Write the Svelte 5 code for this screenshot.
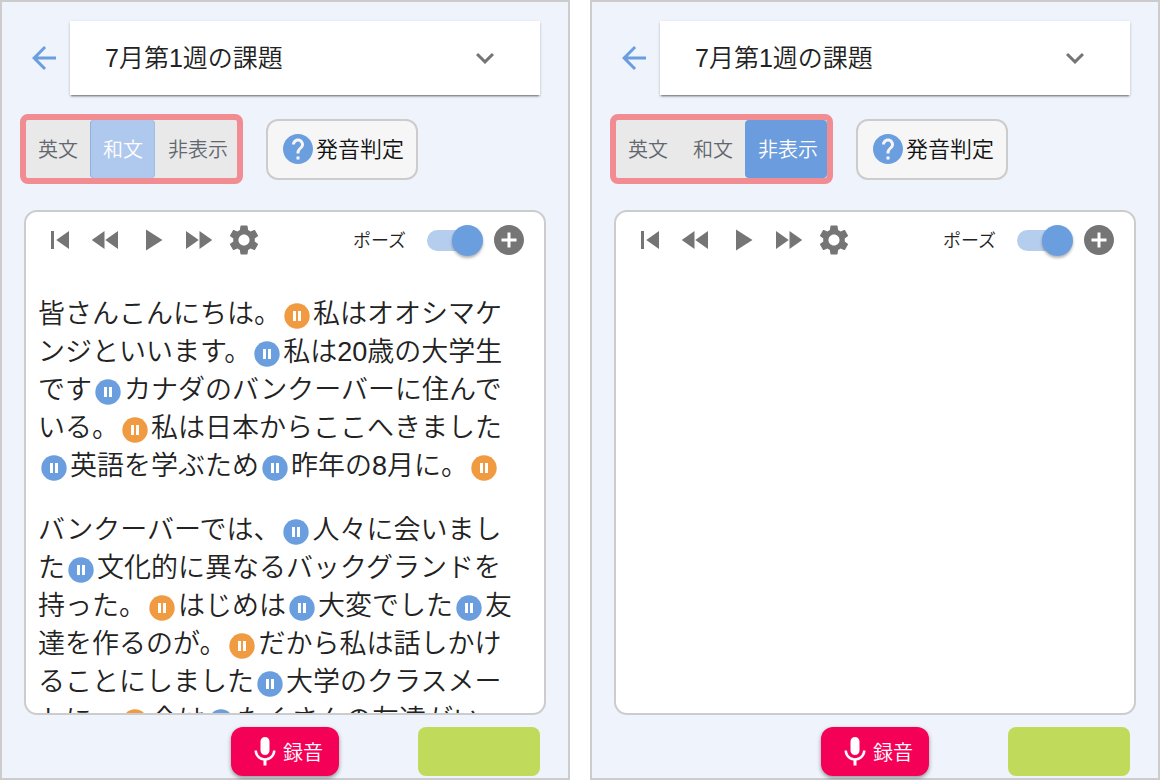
<script>
  const modes = ['英文', '和文', '非表示'];

  let screens = $state([
    { id: 'japanese', mode: 1, soft: true, pause: true },
    { id: 'hidden', mode: 2, soft: false, pause: true }
  ]);

  // Each run of text may be followed by a pause marker: s = short, l = long.
  const paragraphs = [
    [
      ['皆さんこんにちは。', 'l'],
      ['私はオオシマケンジといいます。', 's'],
      ['私は20歳の大学生です', 's'],
      ['カナダのバンクーバーに住んでいる。', 'l'],
      ['私は日本からここへきました', 's'],
      ['英語を学ぶため', 's'],
      ['昨年の8月に。', 'l']
    ],
    [
      ['バンクーバーでは、', 's'],
      ['人々に会いました', 's'],
      ['文化的に異なるバックグランドを持った。', 'l'],
      ['はじめは', 's'],
      ['大変でした', 's'],
      ['友達を作るのが。', 'l'],
      ['だから私は話しかけることにしました', 's'],
      ['大学のクラスメートに。', 'l'],
      ['今は', 's'],
      ['たくさんの友達がい', '']
    ]
  ];

  const players = [
    ['最初へ', 'M6 6h2v12H6zm3.5 6l8.5 6V6z'],
    ['巻き戻し', 'M11 18V6l-8.5 6 8.5 6zm.5-6l8.5 6V6l-8.5 6z'],
    ['再生', 'M8 5v14l11-7z'],
    ['早送り', 'M4 18l8.5-6L4 6v12zm9-12v12l8.5-6L13 6z'],
    ['設定', 'M19.14 12.94c.04-.3.06-.61.06-.94 0-.32-.02-.64-.07-.94l2.03-1.58c.18-.14.23-.41.12-.61l-1.92-3.32c-.12-.22-.37-.29-.59-.22l-2.39.96c-.5-.38-1.03-.7-1.62-.94l-.36-2.54c-.04-.24-.24-.41-.48-.41h-3.84c-.24 0-.43.17-.47.41l-.36 2.54c-.59.24-1.13.57-1.62.94l-2.39-.96c-.22-.08-.47 0-.59.22L2.74 8.87c-.12.21-.08.47.12.61l2.03 1.58c-.05.3-.09.63-.09.94s.02.64.07.94l-2.03 1.58c-.18.14-.23.41-.12.61l1.92 3.32c.12.22.37.29.59.22l2.39-.96c.5.38 1.03.7 1.62.94l.36 2.54c.05.24.24.41.48.41h3.84c.24 0 .44-.17.47-.41l.36-2.54c.59-.24 1.13-.56 1.62-.94l2.39.96c.22.08.47 0 .59-.22l1.92-3.32c.12-.22.07-.47-.12-.61l-2.01-1.58zM12 15.7c-2.04 0-3.7-1.66-3.7-3.7s1.66-3.7 3.7-3.7 3.7 1.66 3.7 3.7-1.66 3.7-3.7 3.7z']
  ];
</script>

{#snippet icon(d)}
  <svg class="icon" viewBox="0 0 24 24" aria-hidden="true"><path {d} /></svg>
{/snippet}

<main>
  {#each screens as screen (screen.id)}
    <section class="screen">
      <header>
        <button class="plain back" aria-label="戻る">
          {@render icon('M20 11H7.83l5.59-5.59L12 4l-8 8 8 8 1.41-1.41L7.83 13H20v-2z')}
        </button>
        <div class="task">
          <select aria-label="課題">
            <option>7月第1週の課題</option>
          </select>
          {@render icon('M16.59 8.59L12 13.17 7.41 8.59 6 10l6 6 6-6z')}
        </div>
      </header>

      <div class="controls">
        <div class="modes" class:soft={screen.soft}>
          {#each modes as label, i}
            <button
              class:active={screen.mode === i}
              aria-pressed={screen.mode === i}
              onclick={() => (screen.mode = i)}>{label}</button>
          {/each}
        </div>
        <button class="judge">
          {@render icon('M12 2C6.48 2 2 6.48 2 12s4.48 10 10 10 10-4.48 10-10S17.52 2 12 2zm1 17h-2v-2h2v2zm2.07-7.75l-.9.92C13.45 12.9 13 13.5 13 15h-2v-.5c0-1.1.45-2.1 1.17-2.83l1.24-1.26c.37-.36.59-.86.59-1.41 0-1.1-.9-2-2-2s-2 .9-2 2H8c0-2.21 1.79-4 4-4s4 1.79 4 4c0 .88-.36 1.68-.93 2.25z')}
          <span>発音判定</span>
        </button>
      </div>

      <div class="panel">
        <div class="toolbar">
          <div class="players">
            {#each players as [name, d]}
              <button class="plain" aria-label={name}>{@render icon(d)}</button>
            {/each}
          </div>
          <label for={`pause-${screen.id}`}>ポーズ</label>
          <input id={`pause-${screen.id}`} class="switch" type="checkbox" bind:checked={screen.pause} />
          <button class="plain" aria-label="追加">
            {@render icon('M12 2C6.48 2 2 6.48 2 12s4.48 10 10 10 10-4.48 10-10S17.52 2 12 2zm5 11h-4v4h-2v-4H7v-2h4V7h2v4h4v2z')}
          </button>
        </div>
        {#if screen.mode === 1}
          <div class="script" lang="ja">
            {#each paragraphs as runs}
              <p>{#each runs as [text, kind]}{text}{#if kind}<svg class="mark" class:long={kind === 'l'} viewBox="0 0 26 26" aria-hidden="true"><circle cx="13" cy="13" r="12.7" /><path d="M9 8h3v10H9zM14 8h3v10h-3z" /></svg>{/if}{/each}</p>
            {/each}
          </div>
        {/if}
      </div>

      <footer>
        <button class="record">
          {@render icon('M12 14c1.66 0 3-1.34 3-3V5c0-1.66-1.34-3-3-3S9 3.340 9 5v6c0 1.660 1.340 3 3 3zm5.300-3c0 3-2.540 5.100-5.300 5.100S6.700 14 6.700 11H5c0 3.410 2.720 6.230 6 6.720V21h2v-3.280c3.280-.480 6-3.300 6-6.720h-1.700z')}
          <span>録音</span>
        </button>
        <button class="submit" aria-label="提出"></button>
      </footer>
    </section>
  {/each}
</main>

<style>
  :global(body) {
    margin: 0;
    background: #fff;
  }

  main {
    display: grid;
    grid-template-columns: 1fr 1fr;
    gap: 20px;
    height: 100vh;
    font-family: 'Liberation Sans', 'Noto Sans CJK JP', sans-serif;
    font-weight: 350;
    color: #222;
  }

  button,
  select {
    font: inherit;
    color: inherit;
    cursor: pointer;
  }

  .screen {
    box-sizing: border-box;
    min-width: 0;
    min-height: 0;
    display: flex;
    flex-direction: column;
    padding: 19px 22px 2px;
    border: 2px solid #ccc;
    background: #eff4fc;
  }

  .icon {
    display: block;
    flex: none;
    width: 36px;
    height: 36px;
    fill: currentColor;
  }

  .plain {
    display: block;
    padding: 0;
    border: 0;
    background: none;
    color: #757575;
  }

  header {
    display: flex;
    align-items: center;
    gap: 8px;
    padding: 0 6px 0 2px;
  }

  .back {
    color: #6b9ede;
  }

  .task {
    flex: 1;
    display: grid;
    align-items: center;
    background: #fff;
    box-shadow: 0 2px 2px -1px rgba(0, 0, 0, 0.5), 0 1px 3px rgba(0, 0, 0, 0.16);
  }

  .task select,
  .task .icon {
    grid-area: 1 / 1;
  }

  .task select {
    appearance: none;
    width: 100%;
    height: 74px;
    padding: 0 72px 0 35px;
    border: 0;
    border-radius: 0;
    background: none;
    font-size: 25px;
  }

  .task .icon {
    justify-self: end;
    margin-right: 37px;
    color: #757575;
    pointer-events: none;
  }

  .controls {
    display: flex;
    align-items: center;
    gap: 23px;
    margin: 19px 0 26px -4px;
  }

  .modes {
    display: flex;
    border: 6px solid #f18c92;
    border-radius: 8px;
    background: #e9e9e9;
  }

  .modes button {
    height: 58px;
    padding: 0 12px 2px;
    border: 0;
    background: none;
    color: #62676f;
    font-size: 20px;
  }

  .modes button + button {
    padding-left: 13px;
  }

  .modes button:last-child {
    padding-right: 9px;
  }

  .modes .active {
    border-radius: 4px;
    background: #6b9cde;
    color: #fff;
  }

  .modes.soft .active {
    background: #afc8ed;
    box-shadow: inset 1px 0 #8fb1e0, inset -1px 0 #a0bde6;
  }

  .judge {
    display: flex;
    align-items: center;
    height: 61px;
    padding: 0 12px;
    border: 2px solid #ccc;
    border-radius: 12px;
    background: #f6f6f6;
    color: #111;
    font-size: 22px;
  }

  .judge .icon {
    color: #6b9ede;
  }

  .judge span {
    padding-bottom: 4px;
  }

  .panel {
    flex: 1;
    min-height: 0;
    overflow: hidden;
    border: 2px solid #ccc;
    border-radius: 13px;
    background: #fff;
  }

  .toolbar {
    display: flex;
    align-items: center;
    padding: 10px 17px 0 16px;
  }

  .players {
    display: flex;
    gap: 10px;
    margin-right: auto;
  }

  label {
    padding-bottom: 2px;
    font-size: 18px;
  }

  .switch {
    appearance: none;
    width: 56px;
    height: 32px;
    margin: 0 8px 0 21px;
    display: grid;
    align-items: center;
    cursor: pointer;
  }

  .switch::before,
  .switch::after {
    content: '';
    grid-area: 1 / 1;
  }

  .switch::before {
    width: 50px;
    height: 21px;
    border-radius: 11px;
    background: #c4c4c4;
  }

  .switch::after {
    width: 31px;
    height: 31px;
    border-radius: 50%;
    background: #f4f4f4;
    box-shadow: 0 2px 3px rgba(0, 0, 0, 0.3);
  }

  .switch:checked::before {
    background: #b5ceee;
  }

  .switch:checked::after {
    justify-self: end;
    background: #6b9ede;
  }

  .script {
    padding: 37px 24px 0 12px;
    font-size: 27px;
    line-height: 38px;
  }

  p {
    margin: 0 0 26px;
  }

  .mark {
    width: 26px;
    height: 26px;
    margin: 0 3px;
    vertical-align: -6px;
    fill: #6b9ede;
  }

  .mark.long {
    fill: #f09a42;
  }

  .mark path {
    fill: #fff;
  }

  footer {
    display: flex;
    justify-content: flex-end;
    gap: 79px;
    padding: 12px 6px 0 0;
  }

  .record {
    display: flex;
    align-items: center;
    height: 49px;
    padding: 0 16px;
    border: 0;
    border-radius: 12px;
    background: #f50057;
    box-shadow: 0 2px 4px rgba(0, 0, 0, 0.4);
    color: #fff;
    font-size: 20px;
  }

  .submit {
    width: 122px;
    height: 49px;
    padding: 0;
    border: 0;
    border-radius: 8px;
    background: #c0db5c;
  }
</style>
